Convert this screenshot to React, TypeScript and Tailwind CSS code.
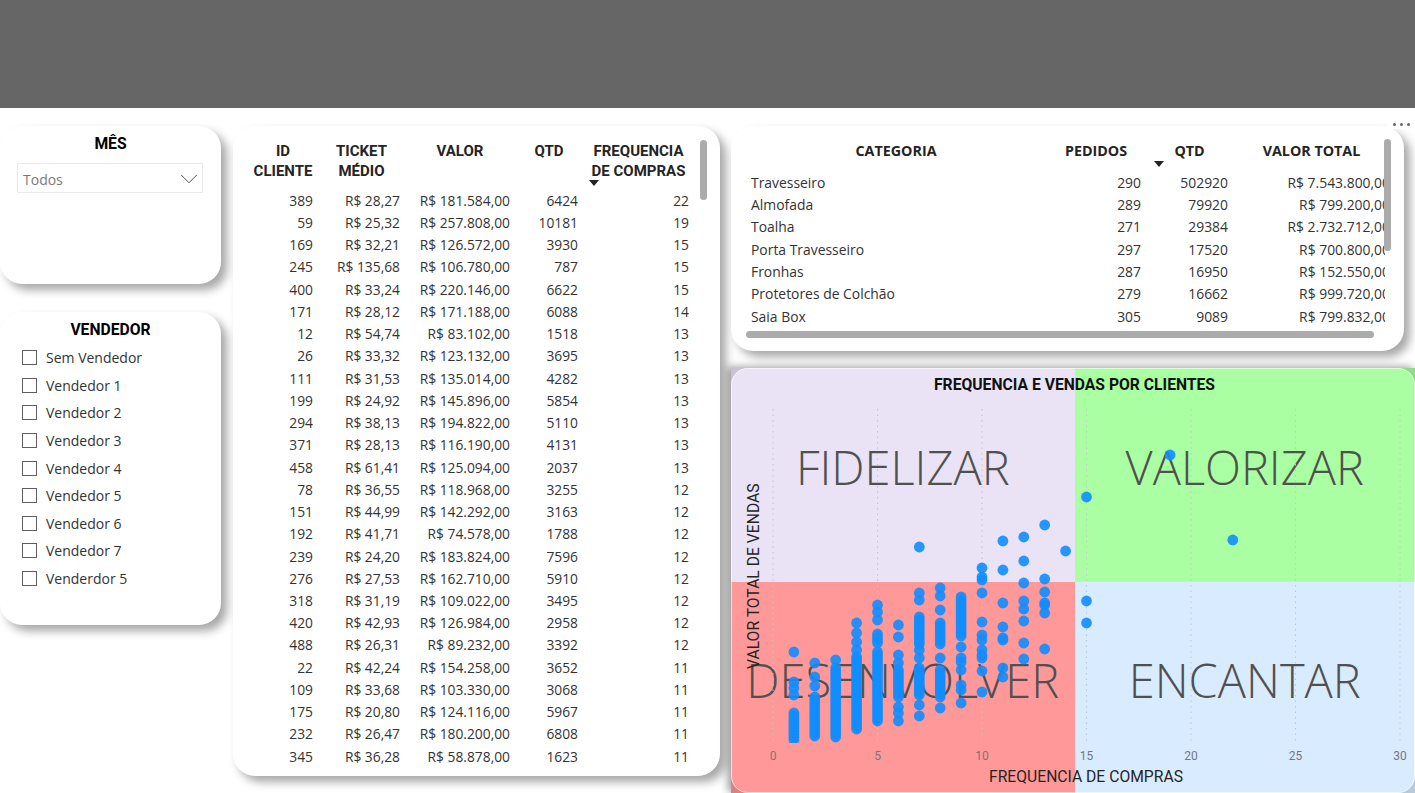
import React from 'react';
import { ChevronDown } from 'lucide-react';

const din = 'font-["Roboto",sans-serif]';
const segoe = 'font-["Open_Sans",sans-serif]';
const cardShadow = 'shadow-[6px_6px_10px_rgba(0,0,0,0.35)]';

const clients: [string, string, string, string, string][] = [
  ['389', 'R$ 28,27', 'R$ 181.584,00', '6424', '22'],
  ['59', 'R$ 25,32', 'R$ 257.808,00', '10181', '19'],
  ['169', 'R$ 32,21', 'R$ 126.572,00', '3930', '15'],
  ['245', 'R$ 135,68', 'R$ 106.780,00', '787', '15'],
  ['400', 'R$ 33,24', 'R$ 220.146,00', '6622', '15'],
  ['171', 'R$ 28,12', 'R$ 171.188,00', '6088', '14'],
  ['12', 'R$ 54,74', 'R$ 83.102,00', '1518', '13'],
  ['26', 'R$ 33,32', 'R$ 123.132,00', '3695', '13'],
  ['111', 'R$ 31,53', 'R$ 135.014,00', '4282', '13'],
  ['199', 'R$ 24,92', 'R$ 145.896,00', '5854', '13'],
  ['294', 'R$ 38,13', 'R$ 194.822,00', '5110', '13'],
  ['371', 'R$ 28,13', 'R$ 116.190,00', '4131', '13'],
  ['458', 'R$ 61,41', 'R$ 125.094,00', '2037', '13'],
  ['78', 'R$ 36,55', 'R$ 118.968,00', '3255', '12'],
  ['151', 'R$ 44,99', 'R$ 142.292,00', '3163', '12'],
  ['192', 'R$ 41,71', 'R$ 74.578,00', '1788', '12'],
  ['239', 'R$ 24,20', 'R$ 183.824,00', '7596', '12'],
  ['276', 'R$ 27,53', 'R$ 162.710,00', '5910', '12'],
  ['318', 'R$ 31,19', 'R$ 109.022,00', '3495', '12'],
  ['420', 'R$ 42,93', 'R$ 126.984,00', '2958', '12'],
  ['488', 'R$ 26,31', 'R$ 89.232,00', '3392', '12'],
  ['22', 'R$ 42,24', 'R$ 154.258,00', '3652', '11'],
  ['109', 'R$ 33,68', 'R$ 103.330,00', '3068', '11'],
  ['175', 'R$ 20,80', 'R$ 124.116,00', '5967', '11'],
  ['232', 'R$ 26,47', 'R$ 180.200,00', '6808', '11'],
  ['345', 'R$ 36,28', 'R$ 58.878,00', '1623', '11'],
];

const categories: [string, string, string, string][] = [
  ['Travesseiro', '290', '502920', 'R$ 7.543.800,00'],
  ['Almofada', '289', '79920', 'R$ 799.200,00'],
  ['Toalha', '271', '29384', 'R$ 2.732.712,00'],
  ['Porta Travesseiro', '297', '17520', 'R$ 700.800,00'],
  ['Fronhas', '287', '16950', 'R$ 152.550,00'],
  ['Protetores de Colchão', '279', '16662', 'R$ 999.720,00'],
  ['Saia Box', '305', '9089', 'R$ 799.832,00'],
];

const sellers = [
  'Sem Vendedor',
  'Vendedor 1',
  'Vendedor 2',
  'Vendedor 3',
  'Vendedor 4',
  'Vendedor 5',
  'Vendedor 6',
  'Vendedor 7',
  'Venderdor 5',
];

// scatter points: frequency -> loose y values, plus [from, to] runs of packed dots
const scatter: { f: number; ys: number[]; runs?: [number, number][] }[] = [
  { f: 1, ys: [652, 682, 688, 695], runs: [[713, 741]] },
  { f: 2, ys: [663, 677, 686], runs: [[697, 737]] },
  { f: 3, ys: [660], runs: [[668, 738]] },
  { f: 4, ys: [623, 633, 642, 650], runs: [[657, 730]] },
  { f: 5, ys: [605, 612, 620], runs: [[634, 645], [652, 723]] },
  { f: 6, ys: [625, 637, 655, 663, 707, 713, 721], runs: [[670, 698]] },
  { f: 7, ys: [547, 593, 600, 650, 658, 705, 716], runs: [[617, 645], [668, 697]] },
  { f: 8, ys: [588, 596, 610, 658, 708], runs: [[623, 645], [670, 697]] },
  { f: 9, ys: [647, 658, 662, 670, 685, 690, 703], runs: [[597, 637]] },
  { f: 10, ys: [568, 577, 580, 593, 622, 635, 640, 650, 655, 658, 671, 692] },
  { f: 11, ys: [541, 570, 603, 627, 638, 640, 668, 677] },
  { f: 12, ys: [537, 561, 583, 601, 609, 621, 643, 659] },
  { f: 13, ys: [525, 579, 592, 603, 605, 613, 649] },
  { f: 14, ys: [551] },
  { f: 15, ys: [497, 601, 623] },
  { f: 19, ys: [455] },
  { f: 22, ys: [540] },
];

const xFor = (f: number) => 773 + f * 20.9;

const points = scatter.flatMap((col) => {
  const ys = [...col.ys];
  (col.runs || []).forEach(([a, b]) => {
    for (let y = a; y <= b; y += 3) ys.push(y);
  });
  return ys.map((y) => ({ x: xFor(col.f), y }));
});

const SortArrow = ({ className }: { className: string }) => (
  <svg width="10" height="6" viewBox="0 0 10 6" className={`absolute ${className}`}>
    <path d="M0 0H10L5 6Z" fill="#252423" />
  </svg>
);

const Quadrant = ({ label, className }: { label: string; className: string }) => (
  <div className={`flex items-center justify-center pb-[15px] ${className}`}>
    <span className={`${segoe} text-[47px] leading-none font-light text-[#505050] whitespace-nowrap`}>{label}</span>
  </div>
);

const ScatterChart = () => (
  <div className="relative h-[425px] w-[684px] overflow-hidden shadow-[-3px_-1px_8px_rgba(0,0,0,0.4)]">
    <div className="grid h-full grid-cols-[343.5px_1fr] grid-rows-[214px_1fr]">
      <Quadrant label="FIDELIZAR" className="bg-[#e9e3f5]" />
      <Quadrant label="VALORIZAR" className="bg-[#a9ffa1]" />
      <Quadrant label="DESENVOLVER" className="bg-[#ff9999]" />
      <Quadrant label="ENCANTAR" className="bg-[#d9ecff]" />
    </div>

    <svg viewBox="731 368 684 425" className="absolute inset-0 h-full w-full">
      <defs>
        <clipPath id="plot">
          <rect x="731" y="368" width="684" height="375" />
        </clipPath>
      </defs>
      {[0, 5, 10, 15, 20, 25, 30].map((t) => (
        <line
          key={t}
          x1={xFor(t)}
          x2={xFor(t)}
          y1="409"
          y2="743"
          stroke="#c8c6c4"
          strokeWidth="1"
          strokeDasharray="1.5 4"
        />
      ))}
      <g clipPath="url(#plot)">
        {points.map((p, i) => (
          <circle key={i} cx={p.x} cy={p.y} r="5.4" fill="#118dff" fillOpacity="0.9" />
        ))}
      </g>
    </svg>

    <div className={`absolute inset-x-0 top-[8px] pl-[3px] text-center ${din} text-[15.7px] leading-[18px] font-bold text-[#111] whitespace-nowrap`}>
      FREQUENCIA E VENDAS POR CLIENTES
    </div>
    <div className={`absolute left-[15px] top-[115px] h-[187px] [writing-mode:vertical-rl] rotate-180 text-center whitespace-nowrap ${din} text-[15.7px] leading-[16px] text-[#252423]`}>
      VALOR TOTAL DE VENDAS
    </div>
    {[0, 5, 10, 15, 20, 25, 30].map((t) => (
      <span
        key={t}
        className={`absolute top-[380px] w-[30px] -ml-[15px] text-center ${din} text-[12px] leading-[16px] text-[#777]`}
        style={{ left: xFor(t) - 731 }}
      >
        {t}
      </span>
    ))}
    <div className={`absolute left-[258px] top-[400px] whitespace-nowrap ${din} text-[15.7px] leading-[18px] text-[#252423]`}>
      FREQUENCIA DE COMPRAS
    </div>
    {/* rounded frame: tints the square corners that stay outside its arc */}
    <div className="absolute inset-0 rounded-[17px] border border-white/60 shadow-[0_0_0_24px_rgba(0,0,0,0.14)] pointer-events-none" />
  </div>
);

export default function App() {
  return (
    <div className="w-[1415px] h-[793px] overflow-hidden bg-white">
      <div className="h-[108px] bg-[#666666]" />

      <div className="flex pt-[18px]">
        {/* slicers */}
        <div className="w-[221px] shrink-0 flex flex-col gap-[28px]">
          <div className={`h-[158px] rounded-[22px] bg-white px-[17px] pt-[8px] ${cardShadow}`}>
            <div className={`text-center ${din} text-[15.7px] leading-[20px] font-bold text-black`}>MÊS</div>
            <div className="mt-[9px] h-[30px] w-[186px] border border-[#eaeaea] flex items-center justify-between pl-[5px] pr-[4px]">
              <span className={`${segoe} pt-[2px] text-[14px] text-[#7a7a7a]`}>Todos</span>
              <ChevronDown size={30} strokeWidth={0.8} className="-mr-[6px] mt-[1px] text-[#555]" />
            </div>
          </div>

          <div className={`h-[313px] rounded-[22px] bg-white pl-[22px] pt-[8px] ${cardShadow}`}>
            <div className={`-ml-[22px] text-center ${din} text-[15.7px] leading-[20px] font-bold text-black`}>VENDEDOR</div>
            <div className="mt-[4px] flex flex-col">
              {sellers.map((s) => (
                <div key={s} className="flex items-center h-[27.6px] gap-[9px]">
                  <span className="w-[15px] h-[15px] border border-[#5f5f5f] shrink-0" />
                  <span className={`${segoe} text-[14px] text-[#333]`}>{s}</span>
                </div>
              ))}
            </div>
          </div>
        </div>

        {/* clients table */}
        <div className={`relative ml-[12px] w-[487px] h-[650px] shrink-0 rounded-[22px] bg-white pl-[15px] pt-[15px] ${cardShadow}`}>
          <div className={`grid grid-cols-[70px_87px_110px_68px_111px] h-[49px] text-center ${din} text-[15px] leading-[20px] font-bold text-[#252423]`}>
            <div>ID<br />CLIENTE</div>
            <div>TICKET<br />MÉDIO</div>
            <div>VALOR</div>
            <div>QTD</div>
            <div className="whitespace-nowrap">FREQUENCIA<br />DE COMPRAS</div>
          </div>
          <SortArrow className="left-[356px] top-[54px]" />
          <div className={`${segoe} text-[13.8px] text-[#333]`}>
            {clients.map((r) => (
              <div key={r[0]} className="grid grid-cols-[70px_87px_110px_68px_111px] h-[22.24px] items-center text-right">
                {r.map((c, i) => (
                  <div key={i} className="pr-[5px] whitespace-nowrap">{c}</div>
                ))}
              </div>
            ))}
          </div>
          <div className="absolute left-[467px] top-[14px] h-[60px] w-[7px] rounded-full bg-[#ababab]" />
        </div>

        {/* right column */}
        <div className="ml-[11px] flex-1 flex flex-col">
          <div className={`relative w-[673px] h-[225px] rounded-[22px] bg-white pl-[15px] pt-[15px] ${cardShadow}`}>
            <div className="w-[639px] overflow-hidden">
              <div className={`grid grid-cols-[300px_100px_87px_157px] h-[31px] text-center ${segoe} text-[14.3px] leading-[20px] font-bold text-[#252423]`}>
                <div>CATEGORIA</div>
                <div>PEDIDOS</div>
                <div>QTD</div>
                <div className="whitespace-nowrap">VALOR TOTAL</div>
              </div>
              <div className={`${segoe} text-[13.9px] text-[#333]`}>
                {categories.map((r) => (
                  <div key={r[0]} className="grid grid-cols-[300px_100px_87px_157px] h-[22.3px] items-center">
                    <div className="pl-[5px] whitespace-nowrap">{r[0]}</div>
                    <div className="pr-[5px] text-right">{r[1]}</div>
                    <div className="pr-[5px] text-right">{r[2]}</div>
                    <div className="text-right whitespace-nowrap">{r[3]}</div>
                  </div>
                ))}
              </div>
            </div>
            <SortArrow className="left-[423px] top-[35px]" />
            <div className="absolute left-[653px] top-[13px] h-[112px] w-[7px] rounded-full bg-[#ababab]" />
            <div className="absolute left-[15px] top-[205px] h-[7px] w-[628px] rounded-full bg-[#ababab]" />
            <div className="absolute left-[656px] -top-[12px] flex h-[15px] w-[28px] items-end justify-center gap-[4px] pb-[3px] bg-white">
              <span className="h-[3px] w-[3px] rounded-full bg-[#666]" />
              <span className="h-[3px] w-[3px] rounded-full bg-[#666]" />
              <span className="h-[3px] w-[3px] rounded-full bg-[#666]" />
            </div>
          </div>

          <div className="mt-[17px]">
            <ScatterChart />
          </div>
        </div>
      </div>
    </div>
  );
}
